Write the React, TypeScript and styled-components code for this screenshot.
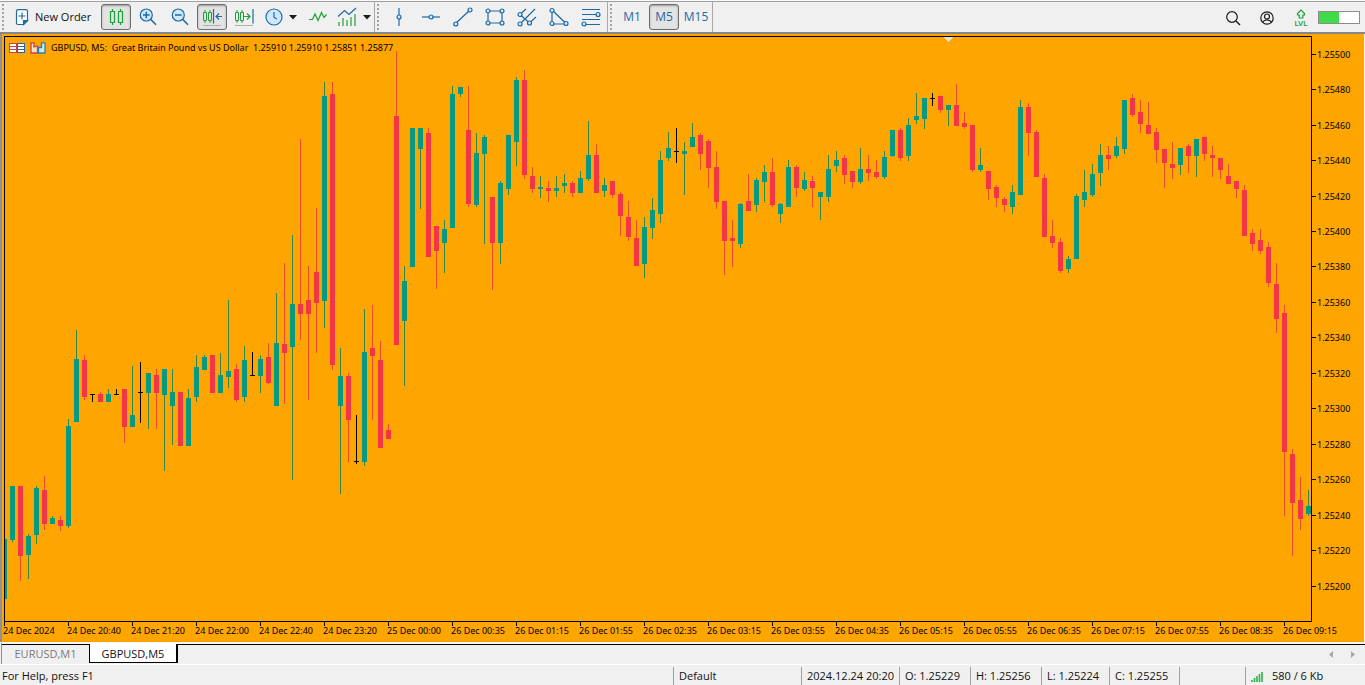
import React from 'react';
import styled, { createGlobalStyle, css } from 'styled-components';

const BLUE = '#1f6aa5';
const GREEN = '#1fa03a';
const INK = '#1c1c1c';
const ORANGE = '#ffa500';
const BULL = '#089981';
const BEAR = '#f23645';

const Global = createGlobalStyle`
  *, *::before, *::after { box-sizing: border-box; }
  html, body { margin: 0; padding: 0; }
  body { background: #f0f0f0; color: #111; font: 11px/16px 'Open Sans', 'Noto Sans', sans-serif; overflow-x: hidden; }
  button { font: inherit; color: inherit; background: none; border: 0; padding: 0; margin: 0; }
  a { color: inherit; text-decoration: none; }
`;

const Terminal = styled.div`
  display: flex;
  flex-direction: column;
  min-height: 100vh;
`;

/* ---------- toolbar ---------- */

const Toolbar = styled.header`
  display: flex;
  height: 34px;
  border-top: 1px solid #fafafa;
  border-bottom: 2px solid #84888c;
  background: #f0f0f0;
  box-shadow: inset 0 1px 0 #a0a0a0;
`;

const ToolGroup = styled.div`
  display: flex;
  align-items: center;
  gap: 2px;
  padding: 1px 1px 0 2px;
  border-right: 1px solid #a8a8a8;
`;

const Grip = styled.span`
  width: 3px;
  height: 27px;
  margin-right: 2px;
  background-image: radial-gradient(circle at 1px 1px, #a2a2a2 1px, transparent 1px);
  background-size: 3px 4px;
`;

const ToolButton = styled.button<{ $pressed?: boolean; $width?: number }>`
  display: flex;
  align-items: center;
  justify-content: center;
  gap: 6px;
  width: ${p => p.$width ?? 30}px;
  height: 26px;
  border: 1px solid transparent;
  border-radius: 3px;
  color: ${BLUE};
  ${p => p.$pressed && css`
    border-color: #6e6e6e;
    background: #e3e3e3;
    box-shadow: inset 0 1px 2px #9a9a9a;
  `}
`;

const OrderButton = styled(ToolButton)`
  justify-content: flex-start;
  padding-left: 5px;
  color: #111;
  white-space: nowrap;
`;

const Timeframe = styled(ToolButton)`
  font-size: 12px;
`;

const RightTools = styled.div`
  display: flex;
  align-items: center;
  margin-left: auto;
  padding: 2px 5px 0 0;
`;

const Meter = styled.span`
  width: 42px;
  height: 13px;
  border: 1px solid #8c8c8c;
  background: linear-gradient(to right, #3fdc4a 20px, #fff 20px);
`;

/* ---------- chart ---------- */

const ChartWindow = styled.main`
  position: relative;
  flex: 1;
  display: grid;
  grid-template-columns: 1fr 52px;
  grid-template-rows: 1fr 20px;
  min-height: 560px;
  padding: 2px 0 0 2px;
  background: ${ORANGE};
  border-left: 2px solid #8d9299;
  border-right: 1px solid #f4f4f4;
`;

const Plot = styled.div`
  min-width: 0;
  border: 1px solid #000;
  overflow: hidden;
`;

const Drawing = styled.svg`
  display: block;
  width: 100%;
  height: 100%;
`;

const Axis = styled.svg`
  display: block;
  width: 100%;
  height: 100%;
  overflow: visible;
  font-family: 'Noto Sans', 'Open Sans', sans-serif;
  font-size: 9px;
`;

const TimeAxis = styled.div`
  grid-column: 1 / 3;
  min-width: 0;
`;

const ChartTitle = styled.div`
  position: absolute;
  top: 8px;
  left: 7px;
  display: flex;
  align-items: center;
  gap: 5px;
  height: 12px;
  font: 9px/12px 'Noto Sans', 'Open Sans', sans-serif;
  color: #000;
  white-space: pre;
`;

/* ---------- tabs and status ---------- */

const TabBar = styled.nav`
  display: flex;
  align-items: flex-start;
  height: 22px;
  margin-left: 1px;
  border-top: 2px solid #fafafa;
  background: linear-gradient(#000, #000) top / 100% 1px no-repeat;
  border-left: 1px solid #8d9299;
`;

const Tab = styled.a<{ $active?: boolean; $width: number }>`
  width: ${p => p.$width}px;
  height: 19px;
  text-align: center;
  line-height: 20px;
  color: #7b7b7b;
  ${p => p.$active && css`
    color: #111;
    background: #fff;
    border: 1px solid #000;
    border-top: 0;
    border-right-width: 2px;
  `}
`;

const TabArrows = styled.div`
  display: flex;
  gap: 12px;
  margin: 6px 8px 0 auto;
`;

const ArrowButton = styled.button`
  display: flex;
  width: 9px;
  height: 9px;
`;

const StatusBar = styled.footer`
  display: flex;
  height: 21px;
  border-top: 1px solid #fff;
  padding-top: 2px;
  background: #f0f0f0;
  line-height: 20px;
`;

const StatusCell = styled.span<{ $width?: number }>`
  display: flex;
  align-items: center;
  gap: 8px;
  flex: ${p => (p.$width ? `0 0 ${p.$width}px` : '1')};
  padding-left: ${p => (p.$width ? 5 : 2)}px;
  border-left: ${p => (p.$width ? '1px solid #a0a0a0' : '0')};
  white-space: nowrap;
`;

/* ---------- icons ---------- */

const Icon = ({ w = 20, h = 20, color = BLUE, children }: { w?: number; h?: number; color?: string; children: React.ReactNode }) => (
  <svg width={w} height={h} viewBox={`0 0 ${w} ${h}`} fill="none" stroke={color} strokeWidth="1.2" aria-hidden="true">
    {children}
  </svg>
);

const Node = ({ x, y }: { x: number; y: number }) => <circle cx={x} cy={y} r="2" fill="#d6ecfb" />;

const Caret = () => (
  <svg width="8" height="5" viewBox="0 0 8 5" aria-hidden="true"><path d="M0 0H8L4 4.5Z" fill="#1c1c1c" /></svg>
);

const NewOrderIcon = () => (
  <Icon w={14} h={18}>
    <path d="M3 1.7H11Q12.5 1.7 12.5 3.2V12.5L8.5 16.5H3Q1.5 16.5 1.5 15V3.2Q1.5 1.7 3 1.7Z" fill="#fff" />
    <path d="M12.5 12.5H8.5V16.5Z" fill={BLUE} />
    <path d="M7 4.5V11.5M3.5 8H10.5" />
  </Icon>
);

const CandlesIcon = () => (
  <Icon color={GREEN}>
    <path d="M4.5 4.5H8.5V15.5H4.5ZM12.5 4.5H16.5V15.5H12.5ZM6.5 2V4.5M6.5 15.5V18M14.5 2V4.5M14.5 15.5V18" />
  </Icon>
);

const ZoomIcon = ({ plus }: { plus?: boolean }) => (
  <Icon>
    <circle cx="8.3" cy="8" r="6" fill="#cfe8fb" />
    <path d={plus ? 'M12.7 12.4L18 17.7M5 8H11.6M8.3 4.7V11.3' : 'M12.7 12.4L18 17.7M5 8H11.6'} strokeWidth="1.5" />
  </Icon>
);

const MiniCandles = () => (
  <path d="M1.5 5.5H4.5V13.5H1.5ZM6.5 5.5H9.5V13.5H6.5ZM3 3V5.5M3 13.5V16M8 3V5.5M8 13.5V16" stroke={GREEN} strokeWidth="1" />
);

const ScrollIcon = () => (
  <Icon>
    <MiniCandles />
    <path d="M11.5 2V16.5M20 9.5H14M17 6.5L14 9.5L17 12.5" />
    <path d="M1 18.5H19" stroke="#b0b0b0" strokeWidth="1" />
  </Icon>
);

const ShiftIcon = () => (
  <Icon>
    <MiniCandles />
    <path d="M10 9.5H16M13 6.5L16 9.5L13 12.5" stroke={GREEN} />
    <path d="M19 2V16.5" />
    <path d="M1 18.5H19" stroke="#b0b0b0" strokeWidth="1" />
  </Icon>
);

const ClockIcon = () => (
  <Icon w={18}>
    <circle cx="9" cy="10" r="8" fill="#cfe8fb" />
    <path d="M9 5V10.5L12 12" />
  </Icon>
);

const LineIcon = () => (
  <Icon color={GREEN}><path d="M1 12.5H4.5L7 7L10 13.5L13.5 5.5L16 10.5L18.5 7.5" /></Icon>
);

const IndicatorsIcon = () => (
  <Icon>
    <path d="M1 9.5L7.5 3.5L12 7.5L19 1" />
    <path d="M2 19V15M6 19V11M10 19V13M14 19V10M18 19V7" stroke={GREEN} />
  </Icon>
);

const VLineIcon = () => <Icon><path d="M10 1V19" /><Node x={10} y={10} /></Icon>;
const HLineIcon = () => <Icon><path d="M1 10H19" /><Node x={10} y={10} /></Icon>;
const TrendIcon = () => <Icon><path d="M2 17L17 3" /><Node x={2.8} y={17} /><Node x={17} y={3} /></Icon>;

const RectIcon = () => (
  <Icon><path d="M3 4H17V16H3Z" /><Node x={3} y={4} /><Node x={17} y={4} /><Node x={3} y={16} /><Node x={17} y={16} /></Icon>
);

const ChannelIcon = () => (
  <Icon>
    <path d="M3 17L18 2M3 7.5L9 2M12.5 16L19 10M3 7.5L12.5 16" />
    <Node x={3} y={7.5} /><Node x={3} y={17} /><Node x={12.5} y={16} />
  </Icon>
);

const TriangleIcon = () => (
  <Icon><path d="M3 3V17H17.5Z" /><Node x={3} y={3.5} /><Node x={3} y={16.5} /><Node x={17} y={16.5} /></Icon>
);

const FiboIcon = () => (
  <Icon><path d="M1 2.5H19M1 7.5H19M1 12.5H19M1 17.5H19" /><Node x={17} y={7.5} /><Node x={3} y={17} /></Icon>
);

const SearchIcon = () => (
  <Icon color={INK}><circle cx="9" cy="9" r="5.3" /><path d="M13 13L17 17" strokeWidth="1.5" /></Icon>
);

const UserIcon = () => (
  <Icon color={INK}>
    <circle cx="10" cy="10" r="6.2" /><circle cx="10" cy="8.5" r="2.5" />
    <path d="M5.6 14.3Q7 11.9 10 11.9T14.4 14.3" />
  </Icon>
);

const LevelIcon = () => (
  <svg width="16" height="20" viewBox="0 0 16 20" aria-hidden="true">
    <path d="M8 2L11.5 5.5V7H9.8V10H6.2V7H4.5V5.5Z" fill="none" stroke={GREEN} strokeWidth="1.2" />
    <text x="8" y="18" textAnchor="middle" fontFamily="Roboto, sans-serif" fontSize="8" fontWeight="500" fill={GREEN}>LVL</text>
  </svg>
);

const QuotesIcon = () => (
  <svg width="16" height="12" viewBox="0 0 16 12" aria-hidden="true">
    <rect x="1" y="1" width="14" height="10" fill="#fff" />
    <path d="M1 1.5H8M1 4.5H8M1 7.5H8M1 10.5H8" stroke="#c8433c" strokeWidth="1" />
    <path d="M8 1.5H15M8 4.5H15M8 7.5H15M8 10.5H15" stroke="#2666a8" strokeWidth="1" />
    <path d="M.5 1V11M7.5 1V11" stroke="#c8433c" />
    <path d="M8.5 1V11M15.5 1V11" stroke="#2666a8" />
  </svg>
);

const TradeIcon = () => (
  <svg width="16" height="12" viewBox="0 0 16 12" aria-hidden="true">
    <path d="M1 .8H4V5L7.5 4V11H1Z" fill="#f6e3cf" stroke="#c8433c" strokeWidth="1.3" />
    <path d="M8.5 11V5.5H11.5V.8H15V11Z" fill="#cfeaf6" stroke="#2e7fa8" strokeWidth="1.3" />
  </svg>
);

const SignalIcon = () => (
  <svg width="13" height="12" viewBox="0 0 13 12" aria-hidden="true">
    <path d="M1 10V12M3.5 8V12M6 6V12M8.5 4V12M11 2V12" stroke="#2bb24c" strokeWidth="1.6" />
  </svg>
);

/* ---------- data ---------- */

type Kind = 'g' | 'r' | 'k';
/* kind, high, body top, body bottom, low */
type Bar = [Kind, number, number, number, number];

const bars: Bar[] = [
  ['g', 539, 539, 599, 599], ['g', 486, 486, 540, 542], ['r', 486, 486, 556, 581], ['g', 534, 536, 555, 579],
  ['g', 486, 488, 535, 544], ['r', 476, 490, 524, 530], ['g', 516, 518, 524, 524], ['r', 516, 520, 526, 531],
  ['g', 419, 426, 526, 528], ['g', 330, 359, 422, 422], ['r', 355, 360, 397, 400], ['k', 394, 394, 395, 402],
  ['r', 392, 394, 402, 402], ['g', 389, 394, 402, 402], ['k', 389, 394, 395, 395], ['r', 389, 389, 427, 443],
  ['g', 366, 415, 427, 427], ['k', 362, 392, 393, 423], ['g', 373, 373, 393, 429], ['r', 369, 375, 393, 429],
  ['g', 369, 369, 395, 471], ['g', 369, 392, 406, 445], ['r', 392, 392, 446, 446], ['g', 389, 398, 446, 446],
  ['g', 355, 367, 397, 402], ['g', 355, 357, 370, 370], ['r', 355, 355, 393, 393], ['g', 353, 375, 393, 393],
  ['g', 300, 371, 377, 388], ['r', 364, 369, 400, 402], ['g', 346, 360, 397, 402], ['k', 352, 375, 376, 376],
  ['g', 355, 359, 376, 393], ['r', 343, 357, 383, 384], ['g', 293, 343, 406, 406], ['r', 263, 344, 353, 404],
  ['g', 235, 304, 347, 480], ['r', 139, 304, 314, 340], ['r', 266, 300, 314, 400], ['r', 208, 272, 303, 353],
  ['g', 82, 96, 301, 328], ['r', 82, 94, 365, 370], ['g', 348, 376, 406, 494], ['r', 373, 376, 420, 462],
  ['k', 415, 461, 462, 464], ['g', 309, 352, 462, 466], ['r', 305, 348, 356, 420], ['r', 341, 360, 448, 448],
  ['r', 424, 430, 439, 439], ['r', 51, 116, 345, 345], ['g', 266, 281, 321, 386], ['g', 128, 128, 267, 267],
  ['g', 128, 128, 149, 209], ['r', 128, 133, 257, 257], ['r', 226, 226, 251, 289], ['g', 220, 229, 243, 273],
  ['g', 86, 94, 228, 228], ['g', 87, 87, 94, 97], ['r', 86, 130, 204, 207], ['g', 133, 153, 205, 207],
  ['g', 135, 137, 154, 244], ['r', 197, 197, 243, 290], ['g', 181, 183, 243, 264], ['g', 135, 135, 189, 195],
  ['g', 77, 80, 142, 166], ['r', 70, 80, 175, 179], ['r', 167, 176, 189, 193], ['g', 176, 187, 189, 198],
  ['r', 181, 188, 191, 202], ['g', 176, 188, 191, 197], ['g', 174, 183, 186, 193], ['r', 181, 183, 193, 197],
  ['g', 171, 178, 193, 193], ['g', 121, 155, 179, 181], ['r', 144, 155, 193, 193], ['g', 178, 185, 191, 197],
  ['r', 181, 181, 195, 198], ['r', 192, 194, 216, 236], ['r', 201, 217, 237, 241], ['r', 220, 238, 266, 266],
  ['g', 217, 227, 264, 278], ['g', 198, 210, 228, 239], ['g', 151, 160, 214, 223], ['g', 132, 148, 158, 161],
  ['k', 128, 151, 152, 163], ['g', 142, 151, 154, 195], ['g', 123, 137, 147, 147], ['r', 133, 135, 154, 170],
  ['r', 139, 141, 168, 188], ['r', 151, 167, 202, 209], ['r', 201, 201, 241, 275], ['r', 220, 238, 241, 267],
  ['g', 203, 204, 244, 248], ['r', 174, 201, 211, 211], ['g', 178, 180, 205, 212], ['g', 165, 172, 182, 202],
  ['r', 158, 172, 205, 207], ['g', 203, 204, 214, 223], ['g', 160, 167, 207, 207], ['r', 165, 167, 188, 197],
  ['g', 172, 180, 189, 191], ['r', 176, 181, 188, 207], ['g', 192, 192, 197, 220], ['g', 155, 169, 197, 202],
  ['g', 151, 160, 166, 172], ['r', 155, 158, 175, 184], ['r', 171, 171, 182, 188], ['g', 148, 169, 182, 184],
  ['r', 155, 169, 173, 181], ['r', 160, 172, 177, 179], ['g', 151, 157, 177, 179], ['g', 130, 130, 156, 157],
  ['r', 128, 130, 158, 161], ['g', 118, 125, 156, 161], ['g', 93, 116, 120, 124], ['g', 98, 98, 119, 129],
  ['k', 93, 98, 99, 106], ['r', 96, 96, 110, 113], ['g', 105, 105, 110, 126], ['r', 84, 105, 126, 126],
  ['r', 112, 123, 127, 129], ['r', 125, 125, 170, 172], ['g', 148, 165, 170, 172], ['r', 171, 171, 189, 200],
  ['r', 185, 187, 198, 207], ['r', 197, 199, 205, 212], ['g', 185, 192, 207, 214], ['g', 100, 107, 195, 195],
  ['r', 103, 107, 133, 156], ['r', 130, 132, 177, 177], ['r', 174, 178, 237, 237], ['r', 220, 236, 243, 248],
  ['r', 238, 242, 271, 273], ['g', 256, 259, 269, 273], ['g', 194, 196, 259, 259], ['g', 170, 192, 200, 207],
  ['g', 164, 174, 195, 197], ['g', 144, 155, 173, 186], ['r', 146, 155, 159, 170], ['g', 137, 146, 156, 158],
  ['g', 100, 100, 149, 154], ['r', 94, 98, 115, 117], ['r', 100, 112, 124, 133], ['r', 102, 125, 134, 134],
  ['r', 128, 132, 150, 163], ['r', 149, 149, 163, 188], ['r', 142, 164, 168, 179], ['g', 148, 148, 165, 175],
  ['r', 144, 146, 156, 173], ['g', 139, 139, 156, 177], ['r', 137, 137, 154, 161], ['r', 146, 155, 158, 177],
  ['r', 158, 158, 170, 179], ['r', 164, 176, 184, 184], ['r', 181, 181, 189, 198], ['r', 185, 190, 236, 236],
  ['r', 229, 233, 244, 251], ['r', 229, 240, 251, 254], ['r', 242, 247, 283, 287], ['r', 263, 284, 319, 333],
  ['r', 305, 313, 452, 516], ['r', 449, 454, 503, 556], ['r', 477, 500, 519, 530], ['g', 490, 506, 514, 516],
];

const fills: Record<Kind, string> = { g: BULL, r: BEAR, k: '#000' };
const wicks: Record<Kind, string> = { g: '#2f8a50', r: '#f04a30', k: '#000' };

const times = [
  '24 Dec 2024', '24 Dec 20:40', '24 Dec 21:20', '24 Dec 22:00', '24 Dec 22:40', '24 Dec 23:20', '25 Dec 00:00',
  '26 Dec 00:35', '26 Dec 01:15', '26 Dec 01:55', '26 Dec 02:35', '26 Dec 03:15', '26 Dec 03:55', '26 Dec 04:35',
  '26 Dec 05:15', '26 Dec 05:55', '26 Dec 06:35', '26 Dec 07:15', '26 Dec 07:55', '26 Dec 08:35', '26 Dec 09:15',
];

const prices = Array.from({ length: 16 }, (_, i) => ({
  label: ((125500 - i * 20) / 100000).toFixed(5),
  y: Math.floor(18.2 + i * 35.46),
}));

const Candles = () => (
  <Drawing shapeRendering="crispEdges" role="img" aria-label="GBPUSD M5 candlestick chart">
    <path d="M938 0H949L943 5Z" fill="#e4e0d8" />
    <g transform="translate(-1 -37)">
      {bars.map(([kind, high, top, bottom, low], i) => (
        <g key={i}>
          <rect x={i * 8} y={high} width={1} height={low - high} fill={wicks[kind]} />
          <rect x={i * 8 - 2} y={top} width={5} height={bottom - top} fill={fills[kind]} />
        </g>
      ))}
    </g>
  </Drawing>
);

const drawTools = [
  { name: 'Vertical line', icon: <VLineIcon /> },
  { name: 'Horizontal line', icon: <HLineIcon /> },
  { name: 'Trendline', icon: <TrendIcon /> },
  { name: 'Rectangle', icon: <RectIcon /> },
  { name: 'Channel', icon: <ChannelIcon /> },
  { name: 'Triangle', icon: <TriangleIcon /> },
  { name: 'Fibonacci', icon: <FiboIcon /> },
];

export default function App() {
  return (
    <Terminal>
      <Global />
      <Toolbar>
        <ToolGroup>
          <Grip />
          <OrderButton $width={90}><NewOrderIcon />New Order</OrderButton>
          <ToolButton $pressed aria-label="Candlesticks"><CandlesIcon /></ToolButton>
          <ToolButton aria-label="Zoom in"><ZoomIcon plus /></ToolButton>
          <ToolButton aria-label="Zoom out"><ZoomIcon /></ToolButton>
          <ToolButton $pressed aria-label="Auto scroll"><ScrollIcon /></ToolButton>
          <ToolButton aria-label="Chart shift"><ShiftIcon /></ToolButton>
          <ToolButton $width={40} aria-label="Periods"><ClockIcon /><Caret /></ToolButton>
          <ToolButton aria-label="Line studies"><LineIcon /></ToolButton>
          <ToolButton $width={38} aria-label="Indicators"><IndicatorsIcon /><Caret /></ToolButton>
        </ToolGroup>
        <ToolGroup>
          <Grip />
          {drawTools.map(t => <ToolButton key={t.name} aria-label={t.name}>{t.icon}</ToolButton>)}
        </ToolGroup>
        <ToolGroup>
          <Grip />
          <Timeframe>M1</Timeframe>
          <Timeframe $pressed>M5</Timeframe>
          <Timeframe>M15</Timeframe>
        </ToolGroup>
        <RightTools>
          <ToolButton $width={34} aria-label="Search"><SearchIcon /></ToolButton>
          <ToolButton $width={34} aria-label="Account"><UserIcon /></ToolButton>
          <ToolButton $width={34} aria-label="Level"><LevelIcon /></ToolButton>
          <Meter />
        </RightTools>
      </Toolbar>

      <ChartWindow>
        <Plot><Candles /></Plot>
        <Axis>
          {prices.map(p => (
            <g key={p.label}>
              <rect x={0} y={p.y} width={4} height={1} />
              <text x={5} y={p.y + 4}>{p.label}</text>
            </g>
          ))}
        </Axis>
        <TimeAxis>
          <Axis>
            {times.map((t, i) => (
              <g key={t}>
                <rect x={i * 64} y={0} width={1} height={4} />
                <text x={i * 64 - 1} y={12}>{t}</text>
              </g>
            ))}
          </Axis>
        </TimeAxis>
        <ChartTitle>
          <QuotesIcon />
          <TradeIcon />
          <span>GBPUSD, M5:  Great Britain Pound vs US Dollar  1.25910 1.25910 1.25851 1.25877</span>
        </ChartTitle>
      </ChartWindow>

      <TabBar>
        <Tab href="#eurusd" $width={87}>EURUSD,M1</Tab>
        <Tab href="#gbpusd" $width={89} $active>GBPUSD,M5</Tab>
        <TabArrows>
          <ArrowButton aria-label="Previous tab"><svg width="9" height="9"><path d="M6 1V8L2 4.5Z" fill="#a8a8a8" /></svg></ArrowButton>
          <ArrowButton aria-label="Next tab"><svg width="9" height="9"><path d="M3 1V8L7 4.5Z" fill="#a8a8a8" /></svg></ArrowButton>
        </TabArrows>
      </TabBar>

      <StatusBar>
        <StatusCell>For Help, press F1</StatusCell>
        <StatusCell $width={128}>Default</StatusCell>
        <StatusCell $width={98}>2024.12.24 20:20</StatusCell>
        <StatusCell $width={71}>O: 1.25229</StatusCell>
        <StatusCell $width={71}>H: 1.25256</StatusCell>
        <StatusCell $width={68}>L: 1.25224</StatusCell>
        <StatusCell $width={70}>C: 1.25255</StatusCell>
        <StatusCell $width={66} />
        <StatusCell $width={120}><SignalIcon />580 / 6 Kb</StatusCell>
      </StatusBar>
    </Terminal>
  );
}
